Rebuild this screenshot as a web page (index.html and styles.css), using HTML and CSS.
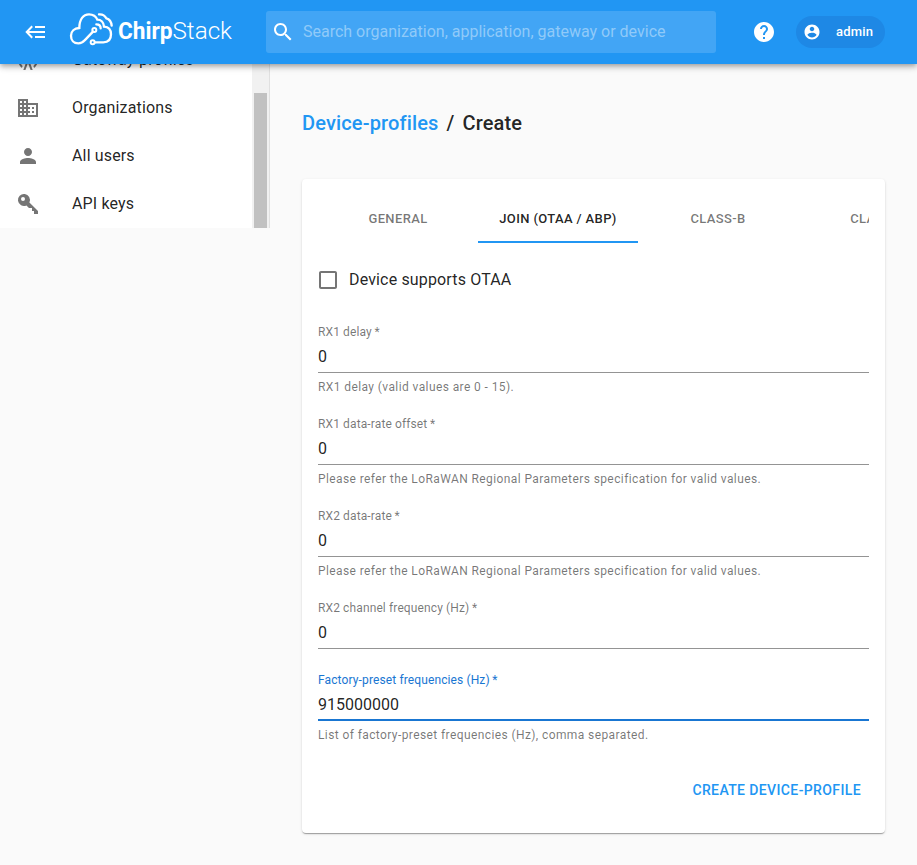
FILE: index.html
```html
<!DOCTYPE html>
<html lang="en">
<head>
<meta charset="utf-8">
<title>ChirpStack</title>
<link rel="stylesheet" href="styles.css">
</head>
<body>
<header class="appbar">
  <svg class="menu-icon" width="24" height="24" viewBox="0 0 24 24"><path d="M10 6.900h10M10 12h10M10 17.100h10M1.700 12H10M7.200 6.300 1.700 12l5.500 5.700" fill="none" stroke="#fff" stroke-width="2"/></svg>
  <div class="logo">
    <svg class="cloud" width="48" height="36" viewBox="0 0 144 108" fill="none" stroke="#fff" stroke-width="7" stroke-linecap="round">
      <path d="M75 62 50 88C44 95 38 97 31 97 17 97 9 87 9 74 9 61 19 52 34 51 34 25 46 10 63 10 75 10 84 16 88 26 99 26 107 35 108 47 122 48 129 57 129 70 129 86 120 94 106 94H81"/>
      <circle cx="79" cy="57" r="6" stroke-width="6"/>
      <circle cx="74" cy="94" r="6" stroke-width="6"/>
      <path d="M93 10C106 9 111 14 115 22 126 25 130 33 131 44M85 40C93 40 98 45 98 52"/>
    </svg>
    <svg class="wordmark" width="118" height="36" viewBox="0 0 118 36"><text class="chirp" x="1" y="26.500" textLength="54.500" lengthAdjust="spacingAndGlyphs">Chirp</text><text class="stack" x="55.500" y="26.500" textLength="59.500" lengthAdjust="spacingAndGlyphs">Stack</text></svg>
  </div>
  <div class="search">
    <svg width="24" height="24" viewBox="0 0 24 24"><path fill="#fff" d="M15.500 14h-.79l-.28-.27C15.410 12.590 16 11.110 16 9.500 16 5.910 13.090 3 9.500 3S3 5.910 3 9.500 5.910 16 9.500 16c1.610 0 3.090-.59 4.230-1.570l.27.28v.79l5 4.990L20.490 19l-4.990-5zm-6 0C7.010 14 5 11.990 5 9.500S7.010 5 9.500 5 14 7.010 14 9.500 11.990 14 9.500 14z"/></svg>
    <span>Search organization, application, gateway or device</span>
  </div>
  <svg class="help" width="24" height="24" viewBox="0 0 24 24"><path fill="#fff" d="M12 2C6.480 2 2 6.480 2 12s4.480 10 10 10 10-4.480 10-10S17.520 2 12 2zm1 17h-2v-2h2v2zm2.070-7.750l-.9.920C13.450 12.900 13 13.500 13 15h-2v-.5c0-1.100.45-2.100 1.170-2.830l1.240-1.260c.37-.36.590-.86.590-1.410 0-1.100-.9-2-2-2s-2 .9-2 2H8c0-2.210 1.790-4 4-4s4 1.790 4 4c0 .88-.36 1.680-.93 2.250z"/></svg>
  <div class="chip">
    <svg width="18" height="18" viewBox="0 0 24 24"><path fill="#fff" d="M12 2C6.480 2 2 6.480 2 12s4.480 10 10 10 10-4.480 10-10S17.520 2 12 2zm0 3c1.660 0 3 1.340 3 3s-1.340 3-3 3-3-1.340-3-3 1.340-3 3-3zm0 14.200c-2.500 0-4.710-1.280-6-3.220.03-1.990 4-3.080 6-3.080 1.990 0 5.970 1.090 6 3.080-1.290 1.940-3.500 3.220-6 3.220z"/></svg>
    <span>admin</span>
  </div>
</header>
<div class="page">
  <aside class="sidebar">
    <nav class="nav">
      <div class="nav-item"><svg width="24" height="24" viewBox="0 0 24 24"><path d="M12,10A2,2 0 0,1 14,12C14,12.500 13.820,12.950 13.530,13.300L16.700,22H14.570L12,14.930L9.430,22H7.300L10.470,13.300C10.180,12.950 10,12.500 10,12A2,2 0 0,1 12,10M12,8A4,4 0 0,0 8,12C8,12.500 8.100,13 8.280,13.460L7.400,15.860C6.530,14.810 6,13.470 6,12A6,6 0 0,1 12,6A6,6 0 0,1 18,12C18,13.470 17.470,14.810 16.600,15.860L15.720,13.460C15.900,13 16,12.500 16,12A4,4 0 0,0 12,8M12,4A8,8 0 0,0 4,12C4,14.360 5,16.500 6.640,17.940L5.920,19.940C3.540,18.110 2,15.230 2,12A10,10 0 0,1 12,2A10,10 0 0,1 22,12C22,15.230 20.460,18.110 18.080,19.940L17.360,17.940C19,16.500 20,14.360 20,12A8,8 0 0,0 12,4Z"/></svg><span>Gateway-profiles</span></div>
      <div class="nav-item"><svg width="24" height="24" viewBox="0 0 24 24"><path d="M12 7V3H2v18h20V7H12zM6 19H4v-2h2v2zm0-4H4v-2h2v2zm0-4H4V9h2v2zm0-4H4V5h2v2zm4 12H8v-2h2v2zm0-4H8v-2h2v2zm0-4H8V9h2v2zm0-4H8V5h2v2zm10 12h-8v-2h2v-2h-2v-2h2v-2h-2V9h8v10zm-2-8h-2v2h2v-2zm0 4h-2v2h2v-2z"/></svg><span>Organizations</span></div>
      <div class="nav-item"><svg width="24" height="24" viewBox="0 0 24 24"><path d="M12 12c2.210 0 4-1.790 4-4s-1.790-4-4-4-4 1.790-4 4 1.790 4 4 4zm0 2c-2.670 0-8 1.340-8 4v2h16v-2c0-2.660-5.330-4-8-4z"/></svg><span>All users</span></div>
      <div class="nav-item"><svg width="24" height="24" viewBox="0 0 24 24"><path d="M22 19v3h-4v-3h-2v-3h-3l-2.600-2.600A6 6 0 1 1 13.400 10.400L22 19zM7 5a2 2 0 1 0 0 4 2 2 0 0 0 0-4z"/></svg><span>API keys</span></div>
    </nav>
    <div class="track"><div class="thumb"></div></div>
  </aside>
  <main class="main">
    <h1 class="title"><a>Device-profiles</a><span class="slash">/</span><span>Create</span></h1>
    <section class="card">
      <div class="tabs">
        <div class="tab">General</div><div class="tab active">Join (OTAA / ABP)</div><div class="tab">Class-B</div><div class="tab">Class-C</div>
      </div>
      <div class="check"><svg width="24" height="24" viewBox="0 0 24 24"><path fill="#757575" d="M19 5v14H5V5h14m0-2H5c-1.100 0-2 .9-2 2v14c0 1.100.9 2 2 2h14c1.100 0 2-.9 2-2V5c0-1.100-.9-2-2-2z"/></svg><span>Device supports OTAA</span></div>
      <div class="field"><div class="label">RX1 delay&thinsp;*</div><div class="value">0</div><div class="helper">RX1 delay (valid values are 0 - 15).</div></div>
      <div class="field"><div class="label">RX1 data-rate offset&thinsp;*</div><div class="value">0</div><div class="helper">Please refer the LoRaWAN Regional Parameters specification for valid values.</div></div>
      <div class="field"><div class="label">RX2 data-rate&thinsp;*</div><div class="value">0</div><div class="helper">Please refer the LoRaWAN Regional Parameters specification for valid values.</div></div>
      <div class="field"><div class="label">RX2 channel frequency (Hz)&thinsp;*</div><div class="value">0</div></div>
      <div class="field focused"><div class="label">Factory-preset frequencies (Hz)&thinsp;*</div><div class="value">915000000</div><div class="helper">List of factory-preset frequencies (Hz), comma separated.</div></div>
      <div class="actions"><span class="submit">Create Device-profile</span></div>
    </section>
  </main>
</div>
</body>
</html>
```
FILE: styles.css
```css
* { box-sizing: border-box; }
body { margin: 0; height: 865px; overflow: hidden; background: #fafafa; color: rgba(0,0,0,.87); font: 16px Roboto, sans-serif; }
svg { display: block; flex: none; }
.appbar { position: relative; z-index: 2; display: flex; align-items: center; height: 64px; padding-left: 25px; background: #2196f3; color: #fff; box-shadow: 0 2px 4px -1px rgba(0,0,0,.2), 0 4px 5px rgba(0,0,0,.14), 0 1px 10px rgba(0,0,0,.12); }
.logo { display: flex; margin-left: 19px; width: 198px; height: 36px; margin-top: -6px; }
.wordmark { margin-left: 1px; margin-top: 1px; }
.wordmark text { font-family: Roboto, sans-serif; font-size: 24px; fill: #fff; }
.wordmark .chirp { font-weight: 700; }
.wordmark .stack { font-weight: 300; }
.search { display: flex; align-items: center; width: 450px; height: 42px; padding-left: 5px; border-radius: 3px; background: #42a5f5; }
.search span { margin: -2px 0 0 8px; font-size: 16px; color: #90caf9; }
.help { margin-left: 36px; }
.chip { display: flex; align-items: center; margin-left: 20px; width: 89px; height: 32px; padding-left: 7px; border-radius: 16px; background: #1e88e5; font-size: 13px; font-weight: 500; }
.chip span { margin: -2px 0 0 15px; letter-spacing: .2px; }
.page { display: flex; align-items: flex-start; }
.sidebar { display: flex; flex: none; width: 270px; height: 164px; background: #fff; border-right: 1px solid #e0e0e0; overflow: hidden; }
.nav { width: 252px; margin-top: -28px; flex: none; }
.nav-item { display: flex; align-items: center; height: 48px; padding-left: 16px; }
.nav-item svg { fill: #757575; }
.nav-item span { margin-left: 32px; letter-spacing: .15px; line-height: 24px; white-space: nowrap; }
.track { width: 17px; height: 164px; padding: 29px 2px 0; background: #f1f1f1; }
.thumb { height: 135px; background: #c1c1c1; }
.main { flex: 1; min-width: 0; padding: 43px 32px 0; }
.title { margin: 0; height: 72px; font-size: 20px; line-height: 32px; font-weight: 500; letter-spacing: .15px; }
.title a { color: #2196f3; }
.slash { margin: 0 8px; }
.card { height: 654px; padding: 16px; background: #fff; border-radius: 4px; box-shadow: 0 2px 1px -1px rgba(0,0,0,.2), 0 1px 1px rgba(0,0,0,.14), 0 1px 3px rgba(0,0,0,.12); }
.tabs { display: flex; height: 48px; overflow: hidden; }
.tab { flex: 0 0 160px; border-bottom: 2px solid transparent; line-height: 48px; height: 48px; text-align: center; text-transform: uppercase; font-size: 13px; font-weight: 500; letter-spacing: .37px; color: rgba(0,0,0,.54); }
.tab.active { color: rgba(0,0,0,.87); border-color: #2196f3; }
.check { display: flex; align-items: center; height: 24px; margin: 25px 0 0 -2px; }
.check span { margin: -2px 0 0 9px; letter-spacing: .15px; }
.field { margin-bottom: 24px; }
.check + .field { margin-top: 33px; }
.label { height: 16px; line-height: 14px; font-size: 12px; letter-spacing: .12px; color: rgba(0,0,0,.54); }
.value { height: 32px; line-height: 31px; border-bottom: 1px solid #949494; }
.helper { height: 20px; padding-top: 4px; line-height: 20px; font-size: 12px; letter-spacing: .4px; color: rgba(0,0,0,.54); }
.focused .label { color: #1976d2; }
.focused .value { border-bottom: 2px solid #1976d2; }
.actions { display: flex; justify-content: flex-end; padding: 7px 8px 0 0; }
.submit { color: #2196f3; font-size: 14px; line-height: 36px; font-weight: 500; letter-spacing: .38px; text-transform: uppercase; }
```
